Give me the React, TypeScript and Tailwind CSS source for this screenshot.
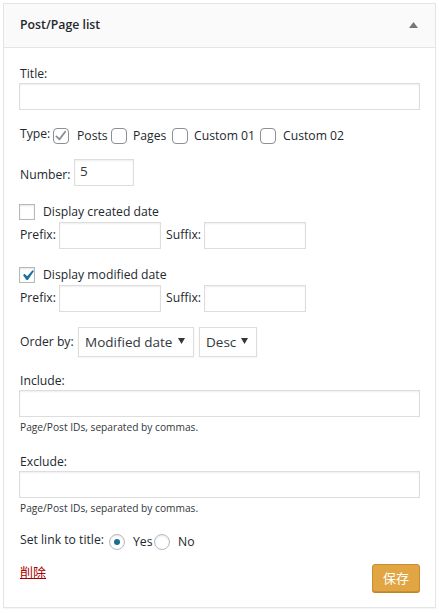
import React from "react";

const FONT = { fontFamily: '"Open Sans", "Noto Sans CJK SC", Arial, sans-serif' };

function RoundCheck({ checked }: { checked?: boolean }) {
  return (
    <span className="inline-flex w-[16px] h-[16px] shrink-0 items-center justify-center rounded-[4px] border border-[#8c8f94] bg-white">
      {checked && (
        <svg width="14" height="14" viewBox="0 0 14 14">
          <path d="M2.4 7.4 L5.4 10.4 L11.2 2.8" fill="none" stroke="#8c8f94" strokeWidth="1.8" strokeLinecap="round" strokeLinejoin="round" />
        </svg>
      )}
    </span>
  );
}

function SquareCheck({ checked }: { checked?: boolean }) {
  return (
    <span className="relative inline-flex w-[16px] h-[16px] shrink-0 items-center justify-center border border-[#b4b9be] bg-white shadow-[inset_0_1px_2px_rgba(0,0,0,0.1)]">
      {checked && (
        <svg width="21" height="21" viewBox="0 0 20 20" className="absolute -left-[3px] -top-[3px]">
          <path d="M14.83 4.89l1.34.94-5.81 8.38H9.02L5.78 9.67l1.34-1.25 2.57 2.4z" fill="#1c6f9c" />
        </svg>
      )}
    </span>
  );
}

function Radio({ checked }: { checked?: boolean }) {
  return (
    <span className="inline-flex w-[16px] h-[16px] shrink-0 items-center justify-center rounded-full border border-[#b4b9be] bg-white shadow-[inset_0_1px_2px_rgba(0,0,0,0.1)]">
      {checked && <span className="w-[6px] h-[6px] rounded-full bg-[#1a6e93]" />}
    </span>
  );
}

function Input({ className = "", value = "" }: { className?: string; value?: string }) {
  return (
    <div className={`h-[27px] shrink-0 border border-[#dddddd] bg-white shadow-[inset_0_1px_2px_rgba(0,0,0,0.07)] flex items-center px-[5px] pb-[3px] text-[13.5px] text-[#32373c] ${className}`}>
      {value}
    </div>
  );
}

function Select({ label, className = "" }: { label: string; className?: string }) {
  return (
    <div className={`h-[30px] shrink-0 border border-[#dddddd] bg-white shadow-[0_1px_2px_rgba(0,0,0,0.05)] flex items-center justify-between pl-[6px] pr-[8px] text-[13.5px] text-[#32373c] ${className}`}>
      <span>{label}</span>
      <svg width="7" height="6" viewBox="0 0 7 6" className="-mt-[3px]">
        <path d="M0 0 H7 L3.5 6 Z" fill="#32373c" />
      </svg>
    </div>
  );
}

export default function App() {
  return (
    <div className="w-[439px] h-[613px] bg-white pt-[3px] pl-[3px] text-[#23282d]" style={FONT}>
      <div className="w-[433px] h-[605px] border border-[#e5e5e5] shadow-[0_1px_1px_rgba(0,0,0,0.04)] flex flex-col">
        <div className="h-[44px] shrink-0 bg-[#fafafa] border-b border-[#e5e5e5] flex items-center justify-between pl-[16px] pr-[17px]">
          <span className="text-[12.3px] font-semibold text-[#23282d]">Post/Page list</span>
          <svg width="9" height="6" viewBox="0 0 9 6" className="-mt-[1px]">
            <path d="M0 6 L4.5 0 L9 6 Z" fill="#72777c" />
          </svg>
        </div>

        <div className="flex flex-col px-[15px] text-[12.2px]">
          <div className="mt-[17px] h-[18px] leading-[18px] pl-[1px]">Title:</div>
          <Input className="w-full" />

          <div className="mt-[17px] h-[18px] flex items-center">
            <span className="w-[34px] shrink-0 pl-[1px] -mt-[3px]">Type:</span>
            <RoundCheck checked />
            <span className="w-[42px] shrink-0 pl-[8px]">Posts</span>
            <RoundCheck />
            <span className="w-[45px] shrink-0 pl-[6px]">Pages</span>
            <RoundCheck />
            <span className="w-[72px] shrink-0 pl-[6px]">Custom 01</span>
            <RoundCheck />
            <span className="pl-[7px]">Custom 02</span>
          </div>

          <div className="mt-[14px] h-[27px] flex items-center">
            <span className="w-[55px] shrink-0 pl-[1px] mt-[5px]">Number:</span>
            <Input className="w-[60px]" value="5" />
          </div>

          <div className="mt-[16px] h-[20px] flex items-center">
            <SquareCheck />
            <span className="ml-[8px]">Display created date</span>
          </div>
          <div className="h-[27px] flex items-center">
            <span className="w-[40px] shrink-0 pl-[1px]">Prefix:</span>
            <Input className="w-[102px]" />
            <span className="w-[43px] shrink-0 pl-[5px]">Suffix:</span>
            <Input className="w-[102px]" />
          </div>

          <div className="mt-[16px] h-[20px] flex items-center">
            <SquareCheck checked />
            <span className="ml-[8px]">Display modified date</span>
          </div>
          <div className="h-[27px] flex items-center">
            <span className="w-[40px] shrink-0 pl-[1px]">Prefix:</span>
            <Input className="w-[102px]" />
            <span className="w-[43px] shrink-0 pl-[5px]">Suffix:</span>
            <Input className="w-[102px]" />
          </div>

          <div className="mt-[15px] h-[30px] flex items-center">
            <span className="w-[59px] shrink-0 pl-[1px]">Order by:</span>
            <Select label="Modified date" className="w-[116px]" />
            <Select label="Desc" className="w-[58px] ml-[5px]" />
          </div>

          <div className="mt-[15px] h-[18px] leading-[18px] pl-[1px]">Include:</div>
          <Input className="w-full" />
          <div className="mt-[2px] h-[17px] leading-[17px] text-[10.2px] pl-[1px] text-[#32373c]">Page/Post IDs, separated by commas.</div>

          <div className="mt-[17px] h-[18px] leading-[18px] pl-[1px]">Exclude:</div>
          <Input className="w-full" />
          <div className="mt-[2px] h-[17px] leading-[17px] text-[10.2px] pl-[1px] text-[#32373c]">Page/Post IDs, separated by commas.</div>

          <div className="mt-[15px] h-[19px] flex items-center">
            <span className="w-[90px] shrink-0 pl-[1px] -mt-[2px]">Set link to title:</span>
            <Radio checked />
            <span className="w-[29px] shrink-0 pl-[8px] mt-[2px]">Yes</span>
            <Radio />
            <span className="pl-[8px] mt-[2px]">No</span>
          </div>

          <div className="mt-[13px] flex justify-between items-start">
            <a className="-mt-[1px] ml-[1px] text-[13px] leading-[18px] text-[#a00] underline" style={{ fontFamily: '"Noto Sans CJK SC", sans-serif' }}>
              削除
            </a>
            <button className="h-[28px] w-[48px] rounded-[3px] border border-[#c98f2f] bg-[#e1a643] text-white text-[13px] shadow-[0_1px_0_#c08427]" style={{ fontFamily: '"Noto Sans CJK SC", sans-serif' }}>
              保存
            </button>
          </div>
        </div>
      </div>
    </div>
  );
}
